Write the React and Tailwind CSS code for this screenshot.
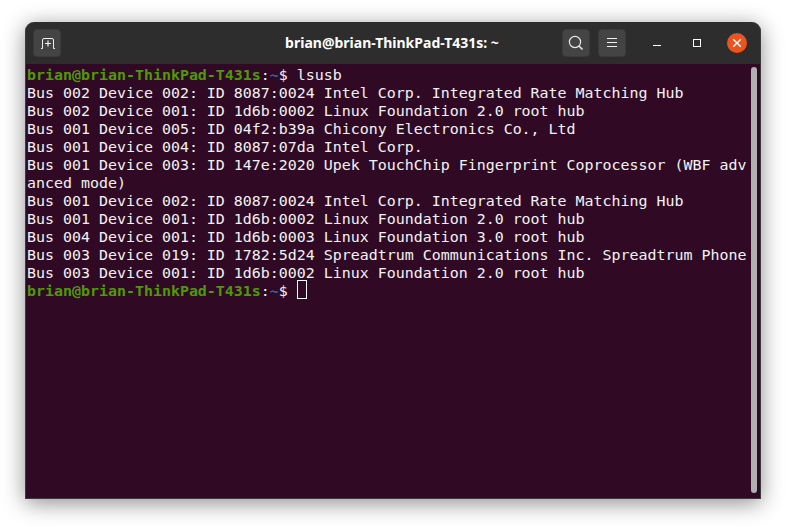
const outputLines = [
  "Bus 002 Device 002: ID 8087:0024 Intel Corp. Integrated Rate Matching Hub",
  "Bus 002 Device 001: ID 1d6b:0002 Linux Foundation 2.0 root hub",
  "Bus 001 Device 005: ID 04f2:b39a Chicony Electronics Co., Ltd",
  "Bus 001 Device 004: ID 8087:07da Intel Corp.",
  "Bus 001 Device 003: ID 147e:2020 Upek TouchChip Fingerprint Coprocessor (WBF adv",
  "anced mode)",
  "Bus 001 Device 002: ID 8087:0024 Intel Corp. Integrated Rate Matching Hub",
  "Bus 001 Device 001: ID 1d6b:0002 Linux Foundation 2.0 root hub",
  "Bus 004 Device 001: ID 1d6b:0003 Linux Foundation 3.0 root hub",
  "Bus 003 Device 019: ID 1782:5d24 Spreadtrum Communications Inc. Spreadtrum Phone",
  "Bus 003 Device 001: ID 1d6b:0002 Linux Foundation 2.0 root hub",
];

const HeaderButton = ({ children }) => {
  return (
    <div className="w-7 h-7 rounded-[4px] bg-[#444444] border border-[#3a3a3a] flex items-center justify-center">
      {children}
    </div>
  );
};

const Prompt = ({ children }) => {
  return (
    <div className="h-[18px] flex items-center">
      <span className="text-[#4e9a06] font-bold">brian@brian-ThinkPad-T431s</span>
      <span>:</span>
      <span className="text-[#3465a4] font-bold">~</span>
      <span>$ </span>
      {children}
    </div>
  );
};

export default function App() {
  return (
    <div className="w-[786px] h-[527px] bg-white overflow-hidden pt-[22px] pl-[25px]">
      <div className="w-[736px] h-[477px] flex flex-col rounded-t-[9px] bg-[#2d2d2d] border border-t-0 border-[#3b3b3b] shadow-[0_4px_22px_rgba(0,0,0,0.45)]">
        {/* title bar */}
        <div className="h-[42px] shrink-0 grid grid-cols-[1fr_auto_1fr] items-center pl-[7px] pr-[13px]">
          <div>
            <HeaderButton>
              <svg width="16" height="16" viewBox="0 0 16 16" fill="none" stroke="#f0f0f0" strokeWidth="1">
                <path d="M2 13.5H3.5V5a1.5 1.5 0 0 1 1.5-1.5h8a1.5 1.5 0 0 1 1.5 1.5V13.5H16" />
                <path d="M9 5.5V11.5M6 8.5H12" strokeWidth="1.2" />
              </svg>
            </HeaderButton>
          </div>
          <div className="pl-1 text-center text-white text-[14px] font-bold font-['Noto_Sans',sans-serif] leading-none">
            brian@brian-ThinkPad-T431s: ~
          </div>
          <div className="flex items-center justify-end">
            <div className="flex items-center gap-2">
              <HeaderButton>
                <svg width="16" height="16" viewBox="0 0 16 16" fill="none" stroke="#e8e8e8" strokeWidth="1.2">
                  <circle cx="7" cy="7" r="5.6" />
                  <path d="M11 11L14.5 14.5" strokeWidth="1.6" />
                </svg>
              </HeaderButton>
              <HeaderButton>
                <svg width="16" height="16" viewBox="0 0 16 16" fill="none" stroke="#f0f0f0" strokeWidth="1">
                  <path d="M3 3.5H13M3 7.5H13M3 11.5H13" />
                </svg>
              </HeaderButton>
            </div>
            <div className="flex items-center ml-[27px]">
              <div className="w-2 h-[7px] mb-px flex items-end">
                <div className="w-2 h-px bg-white" />
              </div>
              <div className="w-2 h-2 ml-8 border border-white" />
              <div className="w-5 h-5 ml-[26px] rounded-full bg-[#e95420] flex items-center justify-center">
                <svg width="10" height="10" viewBox="0 0 10 10" fill="none" stroke="#ffffff" strokeWidth="1.4">
                  <path d="M1.2 1.2L8.8 8.8M8.8 1.2L1.2 8.8" />
                </svg>
              </div>
            </div>
          </div>
        </div>

        {/* terminal */}
        <div className="flex-1 flex bg-[#300a24] min-h-0">
          <div className="flex-1 pl-px pt-0.5 text-[#f2f2f2] text-[14.95px] leading-[18px] font-['DejaVu_Sans_Mono',monospace] whitespace-pre">
            <Prompt>lsusb</Prompt>
            {outputLines.map((line, i) => (
              <div key={i} className="h-[18px]">{line}</div>
            ))}
            <Prompt>
              <span className="w-2 h-[17px] mb-[3px] border border-white box-content" />
            </Prompt>
          </div>
          <div className="w-[12px] shrink-0 pt-[3px] pb-[5px] pl-[3px]">
            <div className="w-[6px] h-full rounded-[3px] bg-[#b0b0b0]" />
          </div>
        </div>
      </div>
    </div>
  );
}
